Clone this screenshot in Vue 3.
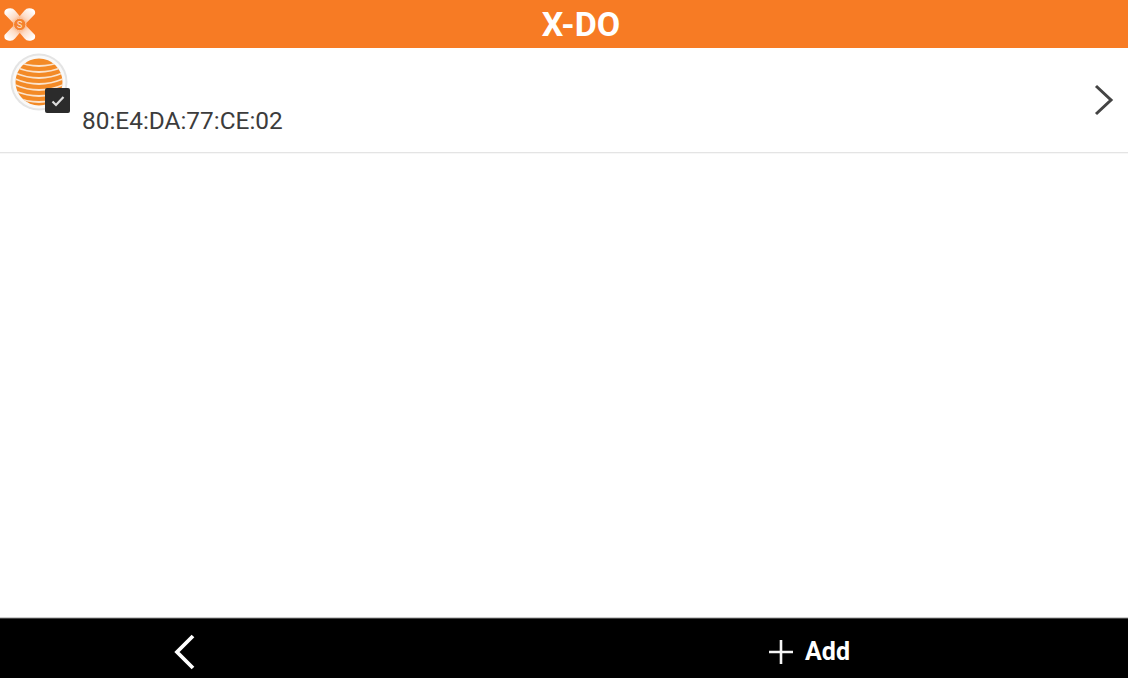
<script setup>
const devices = [{ mac: '80:E4:DA:77:CE:02' }]
// the four lobes of the X logo are one shape, mirrored
const lobes = [
  '',
  'translate(39.5,0) scale(-1,1)',
  'translate(0,49) scale(1,-1)',
  'translate(39.5,49) scale(-1,-1)'
]
const bands = [60, 66, 72, 78, 84, 90, 96, 102].map(y => y - 48)
</script>

<template>
  <div class="app">
    <header class="topbar">
      <svg class="logo" width="40" height="48" viewBox="0 0 40 48">
        <defs>
          <linearGradient id="lobe" gradientUnits="userSpaceOnUse" x1="19" y1="24" x2="7" y2="10">
            <stop offset="0" stop-color="#f99c63" />
            <stop offset="0.45" stop-color="#fddcc6" />
            <stop offset="1" stop-color="#fff" />
          </linearGradient>
        </defs>
        <path
          v-for="t in lobes"
          :key="t"
          :transform="t"
          d="M4.5 14 Q3.5 9.5 8 8.5 Q12.5 7.2 15 10.5 L23 20 L18 28 Z"
          fill="url(#lobe)"
        />
        <circle cx="19.75" cy="24.5" r="6.2" fill="#f5822f" stroke="#fbc7a2" stroke-width="1" />
        <text x="19.75" y="28" font-size="9" text-anchor="middle" fill="#fde3cf" font-family="Roboto, sans-serif">S</text>
      </svg>
      <h1 class="title">X-DO</h1>
    </header>

    <main class="list">
      <div class="row" v-for="d in devices" :key="d.mac">
        <div class="device-icon">
          <svg width="60" height="60" viewBox="0 0 60 60">
            <defs>
              <clipPath id="globe"><circle cx="29" cy="30" r="23.5" /></clipPath>
            </defs>
            <circle cx="29" cy="30" r="28.5" fill="#e4e4e4" />
            <circle cx="29" cy="30" r="26.5" fill="#f9f9f9" />
            <circle cx="29" cy="30" r="23.5" fill="#f38a26" />
            <g clip-path="url(#globe)" fill="none" stroke="#fbe3cc" stroke-width="1.8">
              <path v-for="y in bands" :key="y" :d="`M3 ${y - 4} Q29 ${y + 8} 55 ${y - 4}`" />
            </g>
          </svg>
          <span class="badge">
            <svg width="14" height="12" viewBox="0 0 14 12">
              <path d="M1.5 6.5 L5 10 L12.5 2" fill="none" stroke="#dcdcdc" stroke-width="2.2" />
            </svg>
          </span>
        </div>
        <span class="mac">{{ d.mac }}</span>
        <svg class="chevron" width="20" height="32" viewBox="0 0 20 32">
          <path d="M2 2 L17 16 L2 30" fill="none" stroke="#444" stroke-width="3" />
        </svg>
      </div>
    </main>

    <footer class="bottombar">
      <button class="btn back">
        <svg width="24" height="38" viewBox="0 0 24 38">
          <path d="M21 3 L5 19 L21 35" fill="none" stroke="#fff" stroke-width="3.8" />
        </svg>
      </button>
      <button class="btn add">
        <svg width="26" height="26" viewBox="0 0 26 26">
          <path d="M13 1 V25 M1 13 H25" fill="none" stroke="#f4f4f4" stroke-width="2.6" />
        </svg>
        <span>Add</span>
      </button>
    </footer>
  </div>
</template>

<style>
html, body {
  margin: 0;
  background: #fff;
}
</style>

<style scoped>
.app {
  width: 1128px;
  height: 678px;
  display: flex;
  flex-direction: column;
  font-family: Roboto, "Liberation Sans", sans-serif;
  overflow: hidden;
}
.topbar {
  height: 48px;
  background: #f77b24;
  display: flex;
  align-items: center;
  justify-content: center;
  padding-left: 34px;
  position: relative;
}
.logo {
  position: absolute;
  left: 0;
  top: 0;
}
.title {
  margin: 0;
  color: #fff;
  font-size: 34px;
  font-weight: 700;
  line-height: 50px;
}
.list {
  flex: 1;
  background: #fff;
}
.row {
  height: 105px;
  box-sizing: border-box;
  border-bottom: 1px solid #e4e4e4;
  box-shadow: 0 1px 0 #f7f7f7;
  display: flex;
  align-items: flex-end;
  padding: 0 14px 17px 82px;
  position: relative;
}
.device-icon {
  position: absolute;
  left: 10px;
  top: 4px;
  width: 60px;
  height: 60px;
}
.badge {
  position: absolute;
  left: 35px;
  top: 36px;
  width: 25px;
  height: 25px;
  background: #2b2b2b;
  border-radius: 2px;
  display: flex;
  align-items: center;
  justify-content: center;
}
.mac {
  font-size: 24.4px;
  line-height: 28px;
  color: #3c3c3c;
  flex: 1;
}
.chevron {
  position: absolute;
  right: 14px;
  top: 36px;
}
.bottombar {
  height: 60px;
  box-sizing: border-box;
  background: #000;
  border-top: 1px solid #444;
  box-shadow: 0 -1px 0 #ccc;
  padding-top: 6px;
  display: grid;
  grid-template-columns: 1fr 1fr;
}
.btn {
  background: none;
  border: none;
  padding: 0;
  color: #fff;
  font-family: inherit;
  display: flex;
  align-items: center;
  justify-content: center;
  gap: 11px;
}
.back {
  padding-right: 197px;
}
.add {
  padding-right: 74px;
}
.add span {
  font-size: 25px;
  font-weight: 700;
}
</style>
